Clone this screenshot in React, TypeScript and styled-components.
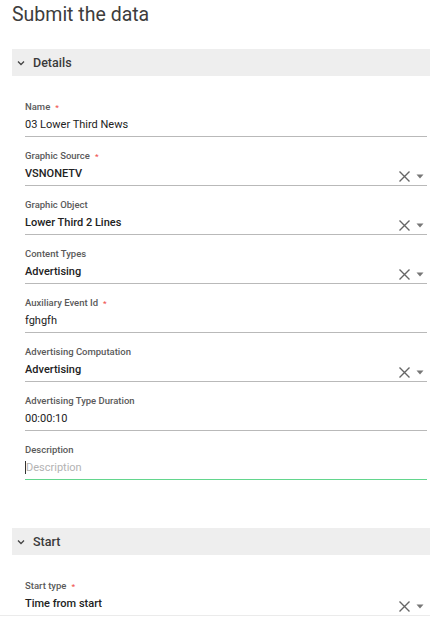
import React from "react";
import styled, { createGlobalStyle } from "styled-components";

const Global = createGlobalStyle`
  html, body { margin: 0; padding: 0; background: #fff; }
  body { font-family: Roboto, "Noto Sans", Arial, sans-serif; -webkit-font-smoothing: antialiased; }
  * { box-sizing: border-box; }
`;

const Frame = styled.div`
  width: 430px;
  height: 616px;
  overflow: hidden;
  border-bottom: 1px solid #ebebeb;
`;

const Title = styled.h1`
  margin: 0;
  padding: 1px 0 0 12px;
  font-size: 19.5px;
  line-height: 28px;
  font-weight: 400;
  color: #3d3d3d;
  margin-bottom: 20px;
`;

const Section = styled.section<{ $gapAfter?: number }>`
  display: flex;
  flex-direction: column;
  margin-bottom: ${(p) => p.$gapAfter ?? 0}px;
`;

const SectionHeader = styled.div`
  margin-left: 12px;
  height: 27px;
  background: #eeeeee;
  display: flex;
  align-items: center;
  gap: 8px;
  padding-left: 5px;
  font-size: 12.5px;
  font-weight: 500;
  color: #3a3a3a;
`;

const Fields = styled.div`
  display: flex;
  flex-direction: column;
  gap: 12px;
  padding: 24px 3px 0 25px;
`;

const Field = styled.div`
  display: flex;
  flex-direction: column;
`;

const Label = styled.label`
  font-size: 9.5px;
  line-height: 14px;
  height: 14px;
  font-weight: 500;
  color: #5a5a5a;
  margin-bottom: 3px;
`;

const Star = styled.span`
  color: #ef5350;
  margin-left: 5px;
  font-size: 8px;
`;

const Control = styled.div<{ $focused?: boolean }>`
  display: flex;
  align-items: center;
  height: 20px;
  padding-bottom: 3px;
  border-bottom: 1px solid ${(p) => (p.$focused ? "#63d68d" : "#b9b9b9")};
`;

const Value = styled.span<{ $strong?: boolean; $placeholder?: boolean }>`
  flex: 1;
  font-size: 11px;
  line-height: 16px;
  font-weight: ${(p) => (p.$strong ? 500 : 400)};
  color: ${(p) => (p.$placeholder ? "#b3b3b3" : "#222")};
`;

const Caret = styled.span`
  display: inline-block;
  width: 1px;
  height: 13px;
  background: #333;
  vertical-align: middle;
  position: relative;
  top: -1px;
`;

const Actions = styled.div`
  display: flex;
  align-items: center;
  gap: 5px;
  padding-right: 3px;
  margin-top: 5px;
`;

const Chevron = () => (
  <svg width="8" height="6" viewBox="0 0 8 6">
    <path d="M1 1.5 L4 4.5 L7 1.5" fill="none" stroke="#444" strokeWidth="1.3" />
  </svg>
);

const ClearIcon = () => (
  <svg width="13" height="13" viewBox="0 0 13 13">
    <path d="M1.5 1.5 L11.5 11.5 M11.5 1.5 L1.5 11.5" stroke="#666" strokeWidth="1.4" />
  </svg>
);

const DropIcon = () => (
  <svg width="8" height="5" viewBox="0 0 8 5">
    <path d="M0.5 0.5 L7.5 0.5 L4 4.5 Z" fill="#777" />
  </svg>
);

type F = { label: string; value: string; required?: boolean; select?: boolean; placeholder?: boolean };

const details: F[] = [
  { label: "Name", value: "03 Lower Third News", required: true },
  { label: "Graphic Source", value: "VSNONETV", required: true, select: true },
  { label: "Graphic Object", value: "Lower Third 2 Lines", select: true },
  { label: "Content Types", value: "Advertising", select: true },
  { label: "Auxiliary Event Id", value: "fghgfh", required: true },
  { label: "Advertising Computation", value: "Advertising", select: true },
  { label: "Advertising Type Duration", value: "00:00:10" },
  { label: "Description", value: "Description", placeholder: true },
];

const FieldRow = ({ f }: { f: F }) => (
  <Field>
    <Label>
      {f.label}
      {f.required && <Star>*</Star>}
    </Label>
    <Control $focused={f.placeholder}>
      <Value $strong={f.select} $placeholder={f.placeholder}>
        {f.placeholder && <Caret />}
        {f.value}
      </Value>
      {f.select && (
        <Actions>
          <ClearIcon />
          <DropIcon />
        </Actions>
      )}
    </Control>
  </Field>
);

export default function App() {
  return (
    <>
      <Global />
      <Frame>
        <Title>Submit the data</Title>
        <Section $gapAfter={48}>
          <SectionHeader>
            <Chevron />
            Details
          </SectionHeader>
          <Fields>
            {details.map((f) => (
              <FieldRow key={f.label} f={f} />
            ))}
          </Fields>
        </Section>
        <Section>
          <SectionHeader>
            <Chevron />
            Start
          </SectionHeader>
          <Fields>
            <FieldRow f={{ label: "Start type", value: "Time from start", required: true, select: true }} />
          </Fields>
        </Section>
      </Frame>
    </>
  );
}
